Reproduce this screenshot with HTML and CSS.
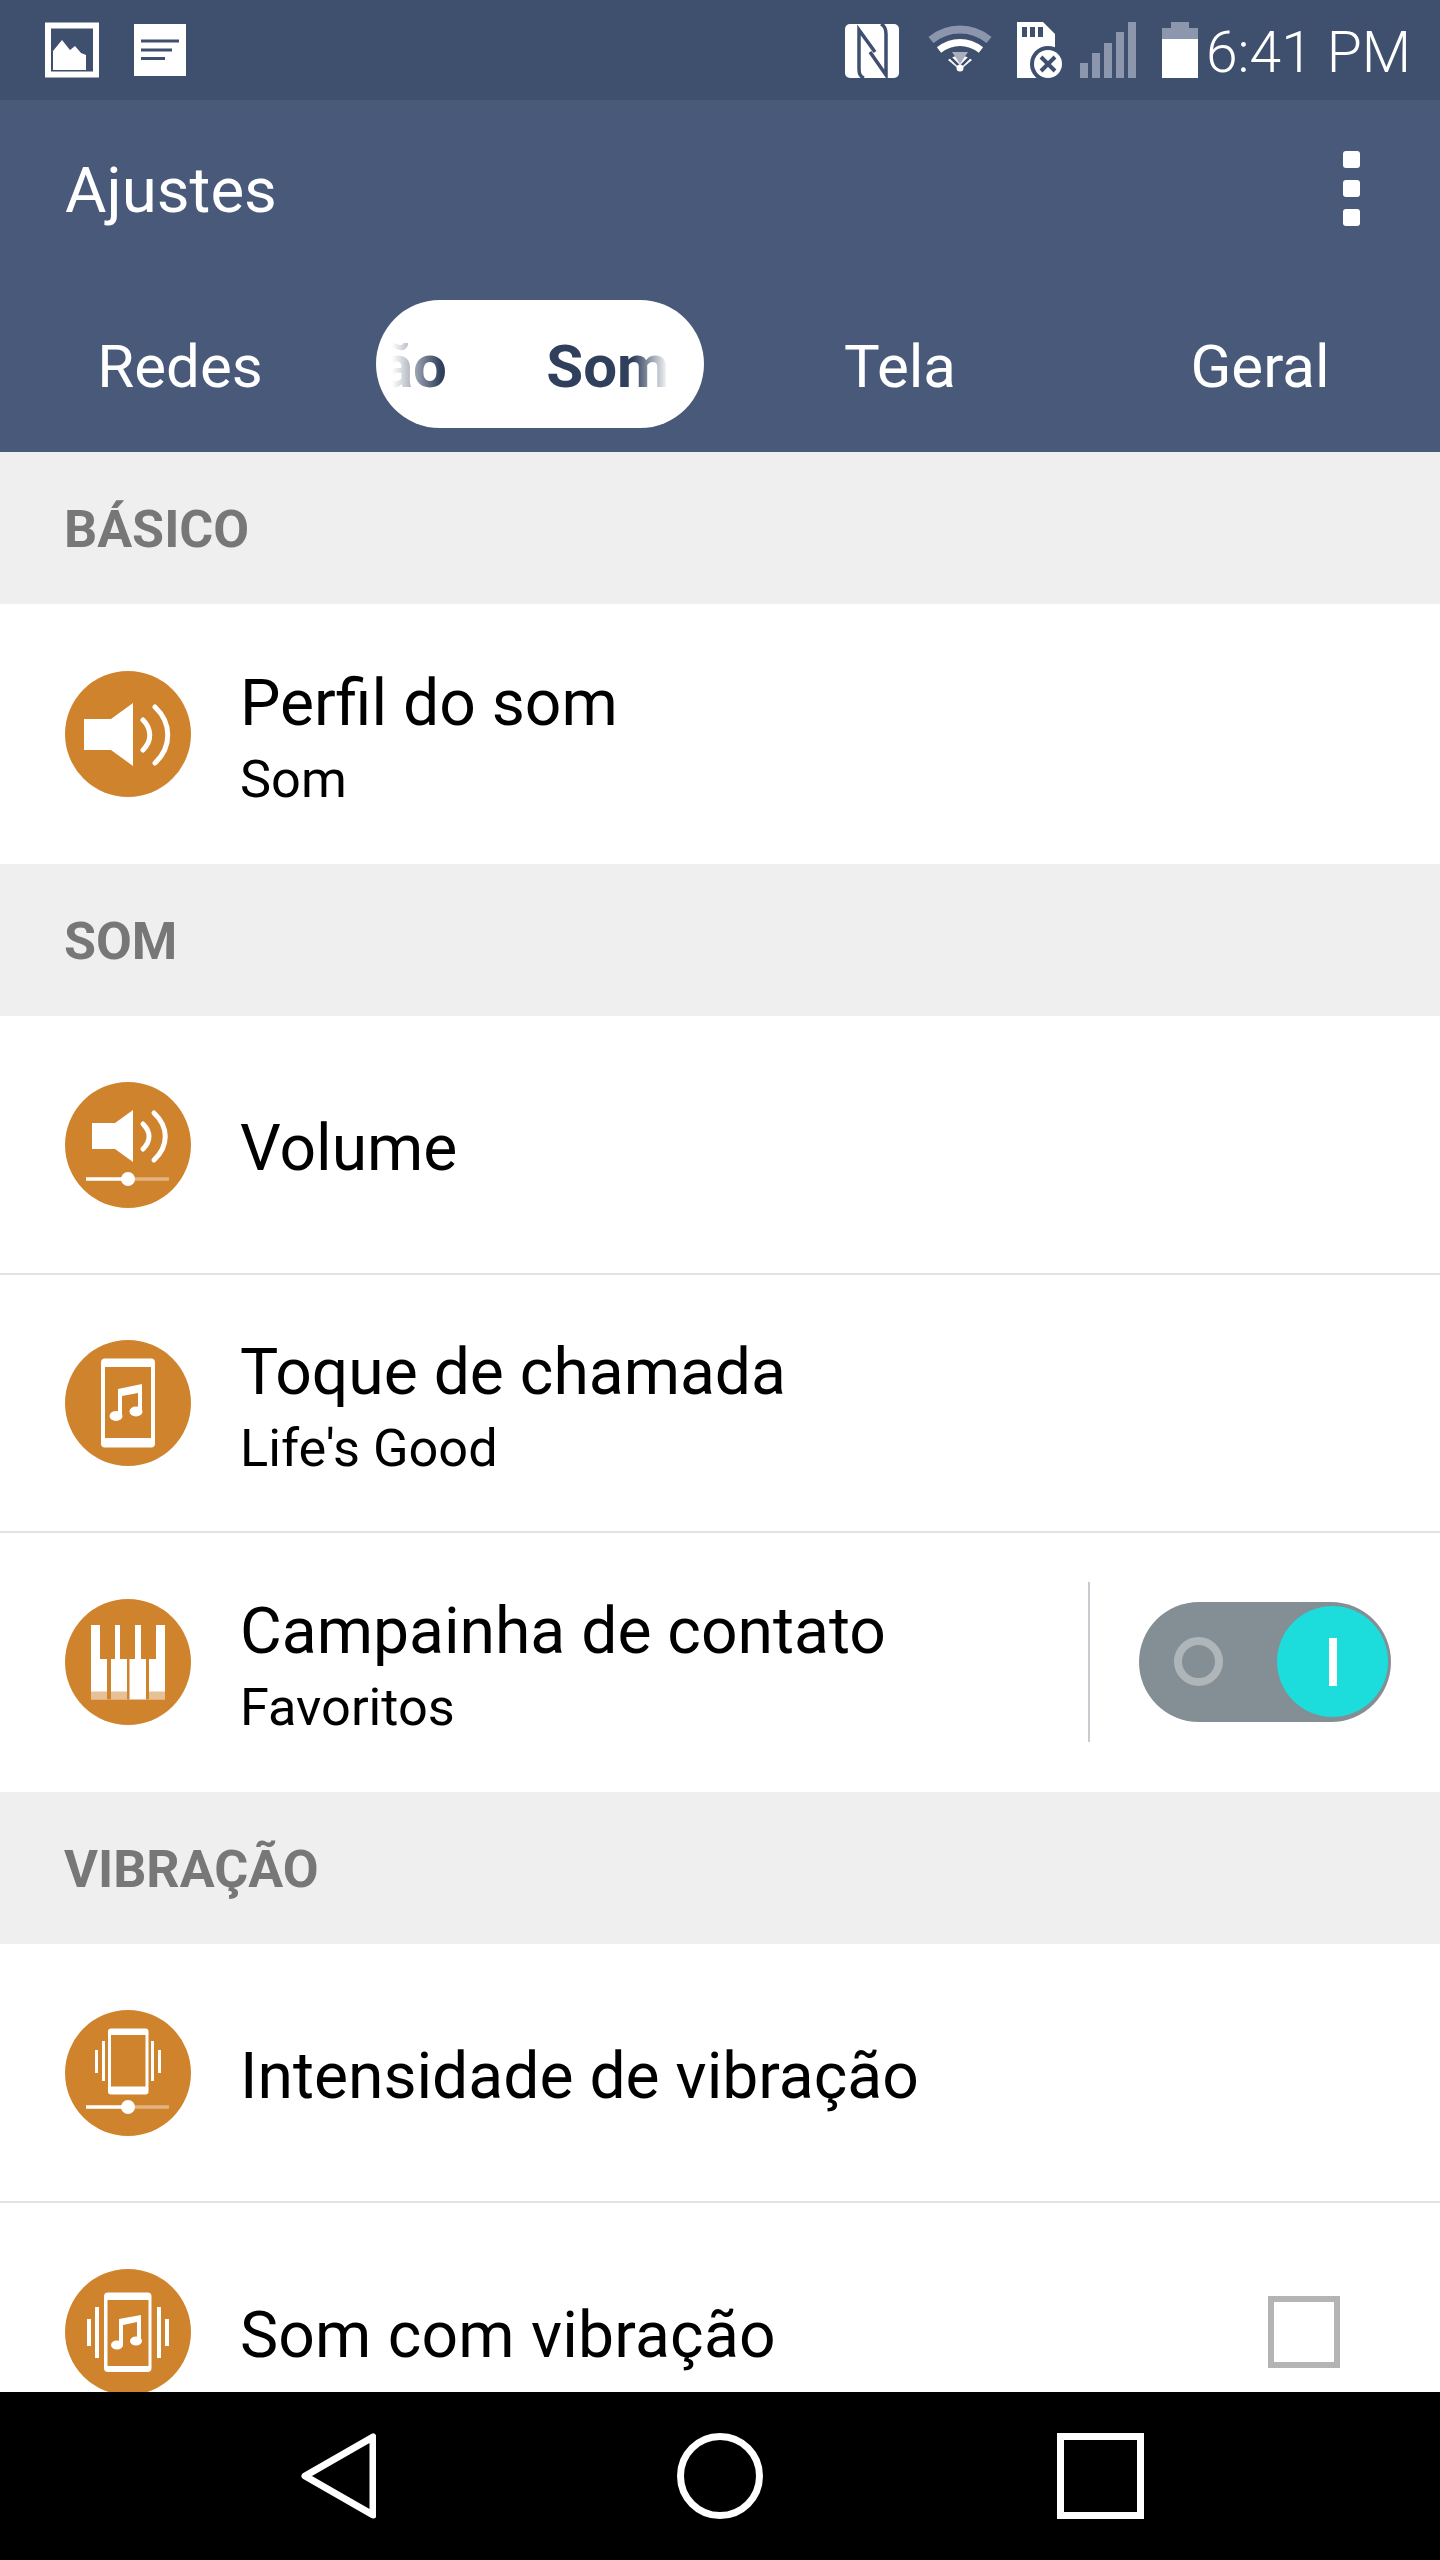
FILE: index.html
```html
<!DOCTYPE html>
<html lang="pt">
<head>
<meta charset="utf-8">
<title>Ajustes</title>
<link rel="stylesheet" href="styles.css">
</head>
<body>
<div class="screen">
  <header class="status">
    <div class="status-left">
      <svg class="st st-img" viewBox="45 22 54 56"><rect x="48" y="25.500" width="48" height="49" fill="none" stroke="#fff" stroke-width="6"/><path d="M53 70V51l9-11 8 10 5-4 6 7 5 2v15z" fill="#fff"/></svg>
      <svg class="st st-doc" viewBox="134 22 52 56"><rect x="134" y="24" width="52" height="52" fill="#fff"/><path d="M141 41h38M141 50h31M141 58.500h24" stroke="#3f4f6e" stroke-width="3" fill="none"/></svg>
    </div>
    <div class="status-right">
      <svg class="st st-nfc" viewBox="845 22 54 56"><rect x="845" y="24" width="54" height="54" rx="5" fill="#fff"/><path d="M864 78c-5-2-5-6-5-10V30l16 22M881 24c4 2 5 5 5 10v41L870 52" fill="none" stroke="#3f4f6e" stroke-width="3.500"/></svg>
      <svg class="st st-wifi" viewBox="927 22 67 56"><path d="M931 40c17-14 41-14 58 0" fill="none" stroke="#8b96ad" stroke-width="8"/><path d="M939 50c13-10 29-10 42 0" fill="none" stroke="#fff" stroke-width="7"/><path d="M948 60c7-6 17-6 24 0l-12 10z" fill="#fff"/><path d="M952 52h16l-8 12z" fill="#a9afbd"/><path d="M949 56l11 11 11-11" fill="none" stroke="#3f4f6e" stroke-width="2.500"/><circle cx="960" cy="68" r="3.500" fill="#fff"/></svg>
      <svg class="st st-sd" viewBox="1017 22 49 56"><path d="M1017 22h26l12 12v44h-38z" fill="#fff"/><path d="M1022 27h5v10h-5zM1030 27h5v10h-5zM1038 27h5v10h-5z" fill="#3f4f6e"/><circle cx="1048" cy="64" r="18" fill="#3f4f6e"/><circle cx="1048" cy="64" r="14" fill="#fff"/><path d="M1041 57l14 14M1055 57l-14 14" stroke="#3f4f6e" stroke-width="4"/></svg>
      <svg class="st st-signal" viewBox="1080 22 56 56"><path d="M1080 63h8v15h-8zM1092 53h8v25h-8zM1104 43h8v35h-8zM1116 32h8v46h-8zM1128 22h8v56h-8z" fill="#8c96ac"/></svg>
      <svg class="st st-batt" viewBox="1162 22 36 56"><path d="M1171 22h18v6h9v11h-36V28h9z" fill="#8c96ac"/><rect x="1162" y="39" width="36" height="39" fill="#fff"/></svg>
      <span class="time">6:41 PM</span>
    </div>
  </header>

  <section class="appbar">
    <div class="title-row">
      <h1 class="title">Ajustes</h1>
      <div class="menu"><i></i><i></i><i></i></div>
    </div>
    <nav class="tabs">
      <div class="tab">Redes</div>
      <div class="tab tab-on">
        <div class="pill"><div class="pill-fade"><span>ão</span><span>Som</span></div></div>
      </div>
      <div class="tab">Tela</div>
      <div class="tab">Geral</div>
    </nav>
  </section>

  <main class="content">
    <div class="section">BÁSICO</div>
    <div class="row row-first">
      <svg class="ic" viewBox="0 0 126 126"><circle class="c" cx="63" cy="63" r="63"/><path class="w" d="M19 48h27l22-16v63L46 79H19z"/><path class="s" d="M78 49c9 9 9 21 0 30M90 36c17 16 17 40 0 56"/></svg>
      <div class="text"><div class="name">Perfil do som</div><div class="sub">Som</div></div>
    </div>
    <div class="section">SOM</div>
    <div class="row">
      <svg class="ic" viewBox="0 0 126 126"><circle class="c" cx="63" cy="63" r="63"/><path class="w" d="M27 41h23l18-13v52L50 67H27z"/><path class="s" d="M78 42c8 8 8 17 0 25M89 31c15 14 15 33 0 47"/><path class="t" d="M21 97h42"/><path class="t dim" d="M63 97h41"/><circle class="w" cx="63" cy="97" r="7"/></svg>
      <div class="text"><div class="name">Volume</div></div>
    </div>
    <div class="row row-short">
      <svg class="ic" viewBox="0 0 126 126"><circle class="c" cx="63" cy="63" r="63"/><rect class="w" x="36" y="18.500" width="54" height="89" rx="4"/><rect class="c" x="40" y="27" width="46" height="71"/><path class="w" d="M53 49l24-5v28h-4V53l-16 3v20h-4z"/><ellipse class="w" cx="51" cy="76" rx="6.500" ry="5"/><ellipse class="w" cx="71" cy="71.500" rx="6.500" ry="5"/></svg>
      <div class="text"><div class="name">Toque de chamada</div><div class="sub">Life's Good</div></div>
    </div>
    <div class="row row-last">
      <svg class="ic" viewBox="0 0 126 126"><circle class="c" cx="63" cy="63" r="63"/><rect class="w" x="26" y="26" width="74" height="74.500"/><path class="c" d="M35 26h15v34H35zM55 26h15v34H55zM76 26h15v34H76zM42 60h4v40.500h-4zM62 60h2.500v40.500H62zM81 60h3v40.500h-3z"/><path class="band" d="M26 92.500h16v8H26zM46 92.500h16v8H46zM84 92.500h16v8H84z"/></svg>
      <div class="text text-grow"><div class="name">Campainha de contato</div><div class="sub">Favoritos</div></div>
      <div class="vline"></div>
      <div class="toggle"><span class="ring"></span><span class="knob"><i></i></span></div>
    </div>
    <div class="section">VIBRAÇÃO</div>
    <div class="row">
      <svg class="ic" viewBox="0 0 126 126"><circle class="c" cx="63" cy="63" r="63"/><rect class="w" x="43" y="18.500" width="40.500" height="66" rx="3"/><rect class="c" x="46" y="25" width="34.500" height="51.500"/><path class="w" d="M37 31h3v40h-3zM86 31h3v40h-3zM30 40h3v23h-3zM93 40h3v23h-3z"/><path class="t" d="M21 97h42"/><path class="t dim" d="M63 97h41"/><circle class="w" cx="63" cy="97" r="7"/></svg>
      <div class="text"><div class="name">Intensidade de vibração</div></div>
    </div>
    <div class="row row-last">
      <svg class="ic" viewBox="0 0 126 126"><circle class="c" cx="63" cy="63" r="63"/><rect class="w" x="39" y="23.500" width="47.500" height="79.500" rx="4"/><rect class="c" x="42.500" y="31" width="41" height="66"/><path class="w" d="M30 38h4v51h-4zM92 38h4v51h-4zM22 50h4v27h-4zM100 50h4v27h-4z"/><path class="w" d="M54 50l22-4v26h-4V53l-14 3v20h-4z"/><ellipse class="w" cx="52" cy="76" rx="6" ry="4.500"/><ellipse class="w" cx="71" cy="72" rx="6" ry="4.500"/></svg>
      <div class="text text-grow"><div class="name name-wide">Som com vibração</div></div>
      <div class="check"></div>
    </div>
  </main>

  <footer class="nav">
    <svg class="nav-ic nav-back" viewBox="301 2433 75 86"><path d="M373 2437v78l-68-39z" fill="none" stroke="#fff" stroke-width="7" stroke-linejoin="round"/></svg>
    <svg class="nav-ic nav-home" viewBox="677 2433 86 86"><circle cx="720" cy="2476" r="39.500" fill="none" stroke="#fff" stroke-width="7"/></svg>
    <svg class="nav-ic nav-recent" viewBox="1057 2433 87 86"><rect x="1060.500" y="2436.500" width="80" height="79" fill="none" stroke="#fff" stroke-width="7"/></svg>
  </footer>
</div>
</body>
</html>
```

FILE: styles.css
```css
* { box-sizing: border-box; }
html, body { margin: 0; padding: 0; }
body { background: #fff; font-family: Roboto, "Liberation Sans", sans-serif; color: #000; }
.screen { width: 1440px; height: 2560px; display: flex; flex-direction: column; overflow: hidden; }

/* status bar */
.status { height: 100px; flex: none; background: #3f4f6e; display: flex; align-items: center; justify-content: space-between; padding: 0 29px 0 45px; color: #fff; }
.status-left, .status-right { display: flex; align-items: center; }
.st { height: 56px; display: block; flex: none; }
.st-img { width: 54px; margin-right: 35px; }
.st-doc { width: 52px; }
.st-nfc { width: 54px; margin-right: 28px; }
.st-wifi { width: 67px; margin-right: 23px; }
.st-sd { width: 49px; margin-right: 14px; }
.st-signal { width: 56px; margin-right: 26px; }
.st-batt { width: 36px; margin-right: 8px; }
.time { width: 205px; padding-top: 6px; font-size: 57px; font-weight: 300; line-height: 56px; white-space: nowrap; }

/* app bar */
.appbar { height: 352px; flex: none; background: #48597a; color: #fff; display: flex; flex-direction: column; }
.title-row { height: 200px; flex: none; display: flex; align-items: center; justify-content: space-between; padding: 0 80px 24px 65px; }
.title { margin: 0; padding-top: 6px; font-size: 63.6px; font-weight: 400; line-height: 80px; }
.menu { display: flex; flex-direction: column; gap: 12px; }
.menu i { display: block; width: 17px; height: 17px; background: #fff; border-radius: 3px; }
.tabs { display: grid; grid-template-columns: repeat(4, 360px); height: 128px; flex: none; }
.tab { display: flex; align-items: center; justify-content: center; padding-top: 6px; font-size: 60px; line-height: 122px; }
.tab-on { padding-top: 0; }
.pill { width: 328px; height: 128px; border-radius: 64px; background: #fff; color: #2f3f5c; font-weight: 700; padding: 6px 35px 0 5px; display: flex; align-items: center; }
.pill-fade { width: 100%; overflow: hidden; display: flex; justify-content: space-between; white-space: nowrap; -webkit-mask-image: linear-gradient(to right, transparent 11px, #000 60px, #000 252px, transparent 288px); mask-image: linear-gradient(to right, transparent 11px, #000 60px, #000 252px, transparent 288px); }

/* list */
.content { flex: 1; min-height: 0; overflow: hidden; }
.section { height: 152px; background: #efefef; color: #777; font-weight: 700; font-size: 52px; line-height: 148px; padding: 4px 0 0 64px; }
.row { height: 259px; display: flex; align-items: center; padding-left: 65px; border-bottom: 2px solid #e2e2e2; background: #fff; }
.row-first { height: 260px; border-bottom: 0; }
.row-short { height: 258px; }
.row-last { border-bottom: 0; padding-bottom: 2px; }
.ic { width: 126px; height: 126px; flex: none; display: block; margin-right: 49px; }
.ic .c { fill: #d0832d; }
.ic .w { fill: #fff; }
.ic .s { fill: none; stroke: #fff; stroke-width: 5; stroke-linecap: round; }
.ic .t { fill: none; stroke: #fff; stroke-width: 3.5; }
.ic .t.dim { stroke-opacity: .4; }
.ic .band { fill: #d0832d; fill-opacity: .5; }
.text { padding-top: 6px; }
.text-grow { flex: 1; min-width: 0; }
.name { font-size: 64.2px; line-height: 84px; white-space: nowrap; }
.name-wide { letter-spacing: .2px; }
.sub { font-size: 52.3px; line-height: 68px; white-space: nowrap; }
.vline { width: 2px; height: 160px; background: #c8ccd0; margin-right: 49px; flex: none; }
.toggle { width: 252px; height: 120px; flex: none; margin-right: 49px; border-radius: 60px; background: #838e95; display: flex; align-items: center; justify-content: space-between; padding: 0 3px 0 35px; }
.ring { width: 49px; height: 49px; border-radius: 50%; border: 8px solid #afb6ba; display: block; }
.knob { width: 111px; height: 111px; border-radius: 50%; background: #1cdcdc; display: flex; align-items: center; justify-content: center; }
.knob i { display: block; width: 8px; height: 48px; background: #fff; }
.check { width: 72px; height: 72px; flex: none; border: 6px solid #b4b4b4; margin-right: 100px; }

/* nav */
.nav { height: 168px; flex: none; background: #000; display: flex; align-items: center; padding-left: 301px; }
.nav-ic { display: block; height: 86px; flex: none; }
.nav-back { width: 75px; }
.nav-home { width: 86px; margin-left: 301px; }
.nav-recent { width: 87px; margin-left: 294px; }
```
